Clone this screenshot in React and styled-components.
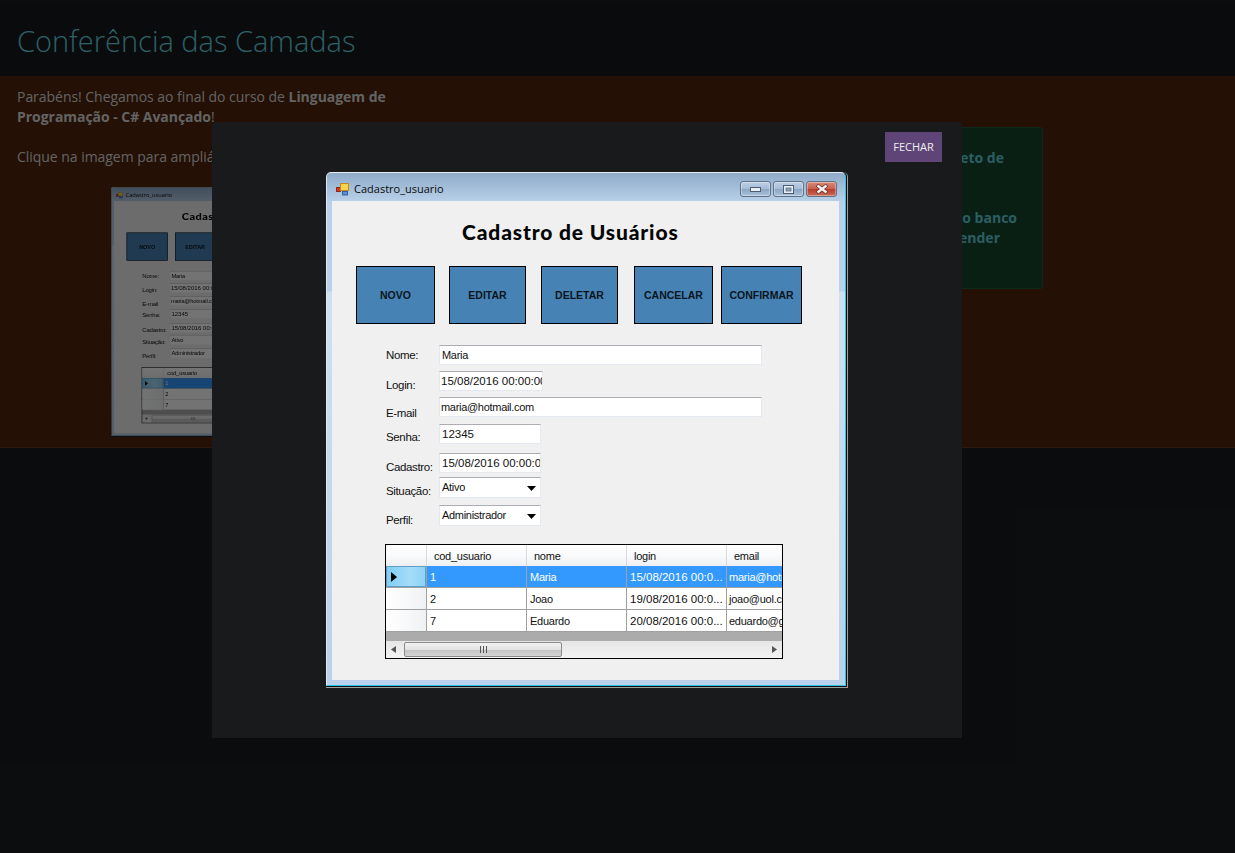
import React from "react";
import styled, { createGlobalStyle } from "styled-components";

const Global = createGlobalStyle`
  html, body { margin: 0; padding: 0; background: #1a1c1f; }
  body { font-family: "Open Sans", "Liberation Sans", sans-serif; font-size: 14px; line-height: 20px; color: #dcdcdc; }
  #root { min-height: 853px; position: relative; overflow: hidden; }
`;

const Page = styled.div`
  width: 1235px;
  height: 853px;
  padding-top: 6px;
  box-sizing: border-box;
`;
const Header = styled.header`
  height: 70px;
  background: #171a1b;
  display: flex;
  align-items: center;
  padding-left: 17px;
  border-bottom: 1px solid #50240b;
`;
const Title = styled.h1`
  margin: 0;
  font-weight: 300;
  font-size: 29px;
  line-height: 40px;
  color: #66d4e0;
`;
const Panel = styled.section`
  background: #50240b;
  height: 371px;
  box-sizing: border-box;
  padding: 10px 192px 0 17px;
  display: flex;
  justify-content: space-between;
  border-bottom: 1px solid #5c3a1e;
`;
const Intro = styled.div`
  width: 380px;
  letter-spacing: -0.04px;
`;
const Para = styled.p`
  margin: 0 0 20px;
`;
const Thumb = styled.div`
  margin-left: 94px;
  width: 272px;
  height: 250px;
  overflow: hidden;
  filter: blur(0.6px);
`;
const ThumbScale = styled.div`
  transform: scale(0.521, 0.485);
  transform-origin: 0 0;
  width: 522px;
`;
const Note = styled.aside`
  margin-top: 40px;
  width: 380px;
  height: 162px;
  box-sizing: border-box;
  padding: 20px 0 0;
  background: #16452c;
  border: 1px solid #1f5a3c;
  border-radius: 3px;
  font-weight: 700;
  color: #60d0dc;
`;
const NoteLine = styled.div`
  text-align: right;
  white-space: nowrap;
  margin-right: ${(p) => p.$end}px;
  margin-top: ${(p) => p.$top || 0}px;
`;

const Overlay = styled.div`
  position: absolute;
  inset: 0;
  background: rgba(0, 0, 0, 0.55);
`;
const Modal = styled.div`
  position: absolute;
  left: 212px;
  top: 122px;
  width: 750px;
  height: 616px;
  box-sizing: border-box;
  padding: 10px 20px 0;
  background: #191a1c;
  border-radius: 3px 3px 0 0;
  display: flex;
  flex-direction: column;
  align-items: center;
`;
const CloseButton = styled.button`
  align-self: flex-end;
  width: 57px;
  height: 30px;
  padding: 0 0 2px;
  border: 0;
  background: #5f4478;
  color: #eeeeee;
  font-family: "Open Sans", sans-serif;
  font-size: 11px;
  margin-bottom: 10px;
`;

/* ---- captured Windows form ---- */
const Frame = styled.div`
  width: 522px;
  height: 516px;
  box-sizing: border-box;
  padding: 0 1px 1px 0;
  border-right: 1px solid #a0a0a0;
  border-bottom: 1px solid #a0a0a0;
  border-radius: 5px 5px 0 0;
  background: #0c0d0e;
  font-family: "Liberation Sans", Arial, sans-serif;
  color: #000;
  flex: none;
`;
const FrameInner = styled.div`
  height: 100%;
  box-sizing: border-box;
  display: flex;
  flex-direction: column;
  padding: 0 6px 5px 5px;
  border-right: 1px solid #27c5e6;
  border-bottom: 1px solid #27c5e6;
  border-top: 1px solid #e8eef5;
  border-left: 1px solid #dfe8f2;
  border-radius: 5px 5px 0 0;
  background: linear-gradient(#8fabc9 0, #b9d1ea 29px, #b9d1ea 118px, #cfe0f2 119px, #b9d1ea 100%);
`;
const TitleBar = styled.div`
  height: 28px;
  flex: none;
  box-sizing: border-box;
  display: flex;
  align-items: center;
  margin: 0 2px 0 -2px;
  padding: 4px 0 0 6px;
  gap: 4px;
  font-family: "Open Sans", sans-serif;
  font-size: 11px;
  color: #0a0a0a;
`;
const AppIcon = styled.svg`
  width: 14px;
  height: 14px;
  flex: none;
`;
const TitleText = styled.span`
  flex: 1;
`;
const WinButtons = styled.div`
  display: flex;
  gap: 2px;
`;
const WinBtn = styled.div`
  width: 31px;
  height: 16px;
  box-sizing: border-box;
  border: 1px solid #5f7288;
  border-radius: 3px;
  display: flex;
  align-items: center;
  justify-content: center;
  background: ${(p) =>
    p.$danger
      ? "linear-gradient(#d98a78 0, #c9604f 48%, #b83c2c 52%, #c96a58 100%)"
      : "linear-gradient(#bcd0e6 0, #a6bdd6 48%, #8ba6c3 52%, #a9c2dc 100%)"};
  box-shadow: inset 0 0 0 1px rgba(255, 255, 255, 0.35);
`;
const Client = styled.div`
  flex: 1;
  background: #f0f0f0;
  display: flex;
  flex-direction: column;
  align-items: flex-start;
`;
const FormTitle = styled.h2`
  margin: 17px 0 0 130px;
  height: 28px;
  line-height: 28px;
  font-family: "Lato", "Liberation Sans", sans-serif;
  font-weight: 900;
  font-size: 21px;
  letter-spacing: 0.85px;
  white-space: nowrap;
  color: #050505;
`;
const ActionRow = styled.div`
  display: flex;
  margin: 20px 0 0 24px;
`;
const ActionButton = styled.div`
  width: ${(p) => p.$w}px;
  margin-left: ${(p) => p.$gap || 0}px;
  height: 58px;
  box-sizing: border-box;
  border: 1px solid #000;
  background: #4682b4;
  display: flex;
  align-items: center;
  justify-content: center;
  font-weight: 700;
  font-size: 10.5px;
  color: #0b1520;
`;
const Form = styled.div`
  margin: 21px 0 0 54px;
  width: 377px;
`;
const Row = styled.div`
  display: flex;
  height: ${(p) => p.$h || 20}px;
  margin-top: ${(p) => p.$top}px;
`;
const Label = styled.div`
  width: 53px;
  height: 14px;
  flex: none;
  font-size: 11.5px;
  letter-spacing: -0.35px;
  line-height: 14px;
  margin-top: ${(p) => p.$dy}px;
  white-space: nowrap;
  color: #111;
`;
const Field = styled.div`
  width: ${(p) => p.$w}px;
  height: 100%;
  box-sizing: border-box;
  background: #fff;
  border: 1px solid #e3e9ef;
  border-top-color: #abadb3;
  padding-left: ${(p) => p.$pad ?? 2}px;
  font-size: ${(p) => (p.$digits ? "11.5px" : "11px")};
  letter-spacing: ${(p) => (p.$digits ? "0" : "-0.3px")};
  line-height: 18px;
  white-space: nowrap;
  overflow: hidden;
  color: #111;
  display: flex;
  justify-content: space-between;
`;
const Caret = styled.svg`
  width: 9px;
  height: 5px;
  margin: 8px 4px 0 0;
  flex: none;
`;
const Grid = styled.div`
  margin: 18px 0 0 53px;
  width: 398px;
  height: 115px;
  box-sizing: border-box;
  border: 1px solid #000;
  background: #ababab;
  display: flex;
  flex-direction: column;
  overflow: hidden;
  font-size: 11px;
  letter-spacing: -0.25px;
`;
const GridRow = styled.div`
  display: grid;
  grid-template-columns: 41px 100px 100px 100px 100px;
  height: ${(p) => p.$h}px;
  flex: none;
  box-sizing: border-box;
  border-bottom: 1px solid #a0a0a0;
  background: ${(p) => (p.$selected ? "#3399ff" : "#fff")};
  color: ${(p) => (p.$selected ? "#fff" : "#111")};
`;
const HeadCell = styled.div`
  padding-left: 7px;
  line-height: 22px;
  border-right: 1px solid #d6d9de;
  background: linear-gradient(#ffffff 0, #f9fafb 50%, #ebedf0 100%);
  color: #111;
  white-space: nowrap;
`;
const RowHead = styled.div`
  border-right: 1px solid #a0a0a0;
  display: flex;
  align-items: center;
  padding-left: 5px;
  box-sizing: border-box;
  background: ${(p) =>
    p.$selected
      ? "linear-gradient(90deg, #7fcdf5 0, #a5dcfa 60%, #8ad2f7 100%)"
      : "linear-gradient(90deg, #ffffff 0, #f8f9fa 50%, #eff1f3 100%)"};
  ${(p) => p.$selected && "box-shadow: inset 0 0 0 1px #5f9fc4;"}
`;
const Cell = styled.div`
  padding-left: ${(p) => p.$pad ?? 3}px;
  border-right: 1px solid #a0a0a0;
  line-height: 23px;
  white-space: nowrap;
  overflow: hidden;
  ${(p) => p.$digits && "font-size: 11.5px; letter-spacing: 0;"}
`;
const GridFill = styled.div`
  flex: 1;
`;
const ScrollBar = styled.div`
  height: 17px;
  flex: none;
  background: linear-gradient(#e6e6e6 0, #f3f3f3 100%);
  display: flex;
  align-items: center;
  padding: 0 5px;
  box-sizing: border-box;
`;
const ScrollThumb = styled.div`
  width: 158px;
  height: 15px;
  margin-left: 8px;
  box-sizing: border-box;
  border: 1px solid #8a8a8a;
  border-radius: 2px;
  background: linear-gradient(#f3f3f3 0, #e2e2e2 50%, #c4c4c4 52%, #d4d4d4 100%);
  display: flex;
  align-items: center;
  justify-content: center;
  margin-right: auto;
`;
const Arrow = styled.svg`
  width: 5px;
  height: 7px;
  flex: none;
`;

const rows = [
  ["1", "Maria", "15/08/2016 00:0...", "maria@hotmail.com"],
  ["2", "Joao", "19/08/2016 00:0...", "joao@uol.com.br"],
  ["7", "Eduardo", "20/08/2016 00:0...", "eduardo@gmail.com"],
];
const actions = [
  ["NOVO", 79, 0],
  ["EDITAR", 77, 14],
  ["DELETAR", 77, 15],
  ["CANCELAR", 79, 16],
  ["CONFIRMAR", 81, 8],
];

function DownCaret() {
  return (
    <Caret viewBox="0 0 9 5">
      <polygon points="0,0 9,0 4.5,5" fill="#000" />
    </Caret>
  );
}

function FormWindow() {
  return (
    <Frame>
      <FrameInner>
        <TitleBar>
          <AppIcon viewBox="0 0 14 14">
            <rect x="0.5" y="5.5" width="4" height="4" fill="#d8322a" stroke="#8a2a20" />
            <rect x="4.5" y="1.5" width="8" height="7" fill="#f7d34a" stroke="#c08a20" />
            <rect x="6.5" y="9.5" width="5" height="3.5" fill="#5a8fd8" stroke="#3a60a0" />
          </AppIcon>
          <TitleText>Cadastro_usuario</TitleText>
          <WinButtons>
            <WinBtn>
              <svg width="11" height="5" viewBox="0 0 11 5">
                <rect x="0.5" y="0.5" width="10" height="4" fill="#e8eef4" stroke="#4e5e70" />
              </svg>
            </WinBtn>
            <WinBtn>
              <svg width="11" height="9" viewBox="0 0 11 9">
                <rect x="0.5" y="0.5" width="10" height="8" fill="#e8eef4" stroke="#4e5e70" />
                <rect x="3" y="3" width="5" height="3" fill="#8ba6c3" stroke="#4e5e70" strokeWidth="0.7" />
              </svg>
            </WinBtn>
            <WinBtn $danger>
              <svg width="14" height="10" viewBox="0 0 14 10">
                <path d="M2 1 L12 9 M12 1 L2 9" stroke="#5c2a22" strokeWidth="3.6" />
                <path d="M2.5 1.5 L11.5 8.5 M11.5 1.5 L2.5 8.5" stroke="#f4f0ee" strokeWidth="2.4" />
              </svg>
            </WinBtn>
          </WinButtons>
        </TitleBar>
        <Client>
          <FormTitle>Cadastro de Usuários</FormTitle>
          <ActionRow>
            {actions.map(([t, w, g]) => (
              <ActionButton key={t} $w={w} $gap={g}>
                {t}
              </ActionButton>
            ))}
          </ActionRow>
          <Form>
            <Row $top={0}>
              <Label $dy={3}>Nome:</Label>
              <Field $w={323}>Maria</Field>
            </Row>
            <Row $top={6}>
              <Label $dy={7}>Login:</Label>
              <Field $w={104} $pad={1} $digits>15/08/2016 00:00:00</Field>
            </Row>
            <Row $top={6}>
              <Label $dy={9}>E-mail</Label>
              <Field $w={323} $pad={1}>maria@hotmail.com</Field>
            </Row>
            <Row $top={7}>
              <Label $dy={6}>Senha:</Label>
              <Field $w={102} $digits>12345</Field>
            </Row>
            <Row $top={9}>
              <Label $dy={7}>Cadastro:</Label>
              <Field $w={102} $digits>15/08/2016 00:00:00</Field>
            </Row>
            <Row $top={4} $h={21}>
              <Label $dy={7}>Situação:</Label>
              <Field $w={102}>
                Ativo
                <DownCaret />
              </Field>
            </Row>
            <Row $top={7} $h={21}>
              <Label $dy={8}>Perfil:</Label>
              <Field $w={102}>
                Administrador
                <DownCaret />
              </Field>
            </Row>
          </Form>
          <Grid>
            <GridRow $h={21}>
              <HeadCell />
              <HeadCell>cod_usuario</HeadCell>
              <HeadCell>nome</HeadCell>
              <HeadCell>login</HeadCell>
              <HeadCell>email</HeadCell>
            </GridRow>
            {rows.map((r, i) => (
              <GridRow key={r[0]} $h={22} $selected={i === 0}>
                <RowHead $selected={i === 0}>
                  {i === 0 && (
                    <svg width="6" height="10" viewBox="0 0 6 10">
                      <polygon points="0,0 6,5 0,10" fill="#000" />
                    </svg>
                  )}
                </RowHead>
                <Cell>{r[0]}</Cell>
                <Cell>{r[1]}</Cell>
                <Cell $digits>{r[2]}</Cell>
                <Cell $pad={2}>{r[3]}</Cell>
              </GridRow>
            ))}
            <GridFill />
            <ScrollBar>
              <Arrow viewBox="0 0 5 7">
                <polygon points="5,0 0,3.5 5,7" fill="#555" />
              </Arrow>
              <ScrollThumb>
                <svg width="7" height="7" viewBox="0 0 7 7">
                  <path d="M0.5 0V7M3.5 0V7M6.5 0V7" stroke="#555" />
                </svg>
              </ScrollThumb>
              <Arrow viewBox="0 0 5 7">
                <polygon points="0,0 5,3.5 0,7" fill="#555" />
              </Arrow>
            </ScrollBar>
          </Grid>
        </Client>
      </FrameInner>
    </Frame>
  );
}

export default function App() {
  return (
    <>
      <Global />
      <Page>
        <Header>
          <Title>Conferência das Camadas</Title>
        </Header>
        <Panel>
          <Intro>
            <Para>
              Parabéns! Chegamos ao final do curso de <b>Linguagem de Programação - C# Avançado</b>!
            </Para>
            <Para>Clique na imagem para ampliá-la.</Para>
            <Thumb>
              <ThumbScale>
                <FormWindow />
              </ThumbScale>
            </Thumb>
          </Intro>
          <Note>
            <NoteLine $end={38}>Confira as camadas do projeto de</NoteLine>
            <NoteLine $end={25} $top={40}>Observe a estrutura do banco</NoteLine>
            <NoteLine $end={42}>para melhor compreender</NoteLine>
          </Note>
        </Panel>
      </Page>
      <Overlay />
      <Modal>
        <CloseButton>FECHAR</CloseButton>
        <FormWindow />
      </Modal>
    </>
  );
}
